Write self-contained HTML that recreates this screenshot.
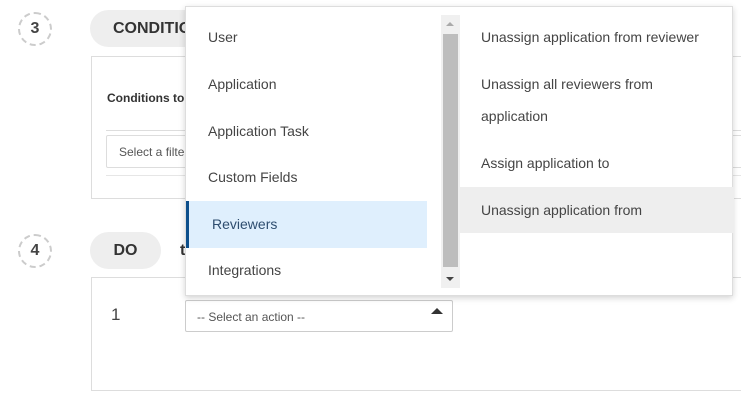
<!DOCTYPE html>
<html><head><style>
*{box-sizing:border-box;margin:0;padding:0}
body{width:741px;height:400px;background:#fff;font-family:"Liberation Sans",sans-serif;color:#333;position:relative;overflow:hidden}
.a{position:absolute}
.circ{width:34px;height:34px;border:2px dashed #ccc;border-radius:50%;text-align:center;line-height:30px;font-size:16px;font-weight:bold;color:#444}
.pill{background:#eee;border-radius:19px;font-weight:bold;font-size:16px;color:#333;line-height:37px}
.li{position:absolute;left:22px;font-size:14px;color:#444}
.ri{position:absolute;left:21px;font-size:14px;color:#444;line-height:32px}
</style></head><body>
<div class="a circ" style="left:18px;top:12px">3</div>
<div class="a pill" style="left:90px;top:10px;width:130px;height:37px;padding-left:23px">CONDITIONS</div>
<div class="a" style="left:91px;top:56px;width:660px;height:143px;border:1px solid #ddd"></div>
<div class="a" style="left:107px;top:91px;font-size:12px;font-weight:bold;color:#333">Conditions to</div>
<div class="a" style="left:106px;top:130px;width:640px;border-top:1px solid #ddd"></div>
<div class="a" style="left:106px;top:135px;width:640px;height:33px;border:1px solid #ddd;border-radius:2px;font-size:12px;color:#555;padding:9px 12px">Select a filter</div>
<div class="a" style="left:106px;top:175px;width:640px;border-top:1px solid #e6e6e6"></div>

<div class="a circ" style="left:18px;top:234px">4</div>
<div class="a pill" style="left:90px;top:232px;width:71px;height:37px;text-align:center">DO</div>
<div class="a" style="left:180px;top:242px;font-size:16px;font-weight:bold">t</div>
<div class="a" style="left:91px;top:277px;width:660px;height:114px;border:1px solid #ddd"></div>
<div class="a" style="left:111px;top:305px;font-size:17px;color:#444">1</div>
<div class="a" style="left:185px;top:300px;width:268px;height:32px;border:1px solid #ccc;border-radius:2px;font-size:12px;color:#555;padding:9px 11px">-- Select an action --</div>
<div class="a" style="left:431px;top:308px;width:0;height:0;border-left:6px solid transparent;border-right:6px solid transparent;border-bottom:6px solid #333"></div>

<div class="a" style="left:185px;top:6px;width:548px;height:290px;background:#fff;border:1px solid #ddd;box-shadow:0 2px 6px rgba(0,0,0,.18)">
 <div class="li" style="top:22px">User</div>
 <div class="li" style="top:69px">Application</div>
 <div class="li" style="top:116px">Application Task</div>
 <div class="li" style="top:162px">Custom Fields</div>
 <div class="a" style="left:0;top:194px;width:241px;height:47px;background:#dfeffd;border-left:3px solid #0d4f8b"></div>
 <div class="li" style="top:209px;left:26px;color:#2e4d6f">Reviewers</div>
 <div class="li" style="top:255px">Integrations</div>
 <div class="a" style="left:255px;top:8px;width:19px;height:273px;background:#f0f0f0"></div>
 <div class="a" style="left:257px;top:27px;width:15px;height:233px;background:#bdbdbd"></div>
 <div class="a" style="left:260px;top:15px;border-left:4px solid transparent;border-right:4px solid transparent;border-bottom:4px solid #aaa"></div>
 <div class="a" style="left:260px;top:270px;border-left:4px solid transparent;border-right:4px solid transparent;border-top:4px solid #444"></div>
 <div class="a" style="left:274px;top:0;width:274px;height:288px">
  <div class="ri" style="top:14px">Unassign application from reviewer</div>
  <div class="ri" style="top:61px">Unassign all reviewers from<br>application</div>
  <div class="ri" style="top:140px">Assign application to</div>
  <div class="a" style="left:0;top:180px;width:274px;height:46px;background:#eee"></div>
  <div class="ri" style="top:187px">Unassign application from</div>
 </div>
</div>
</body></html>
